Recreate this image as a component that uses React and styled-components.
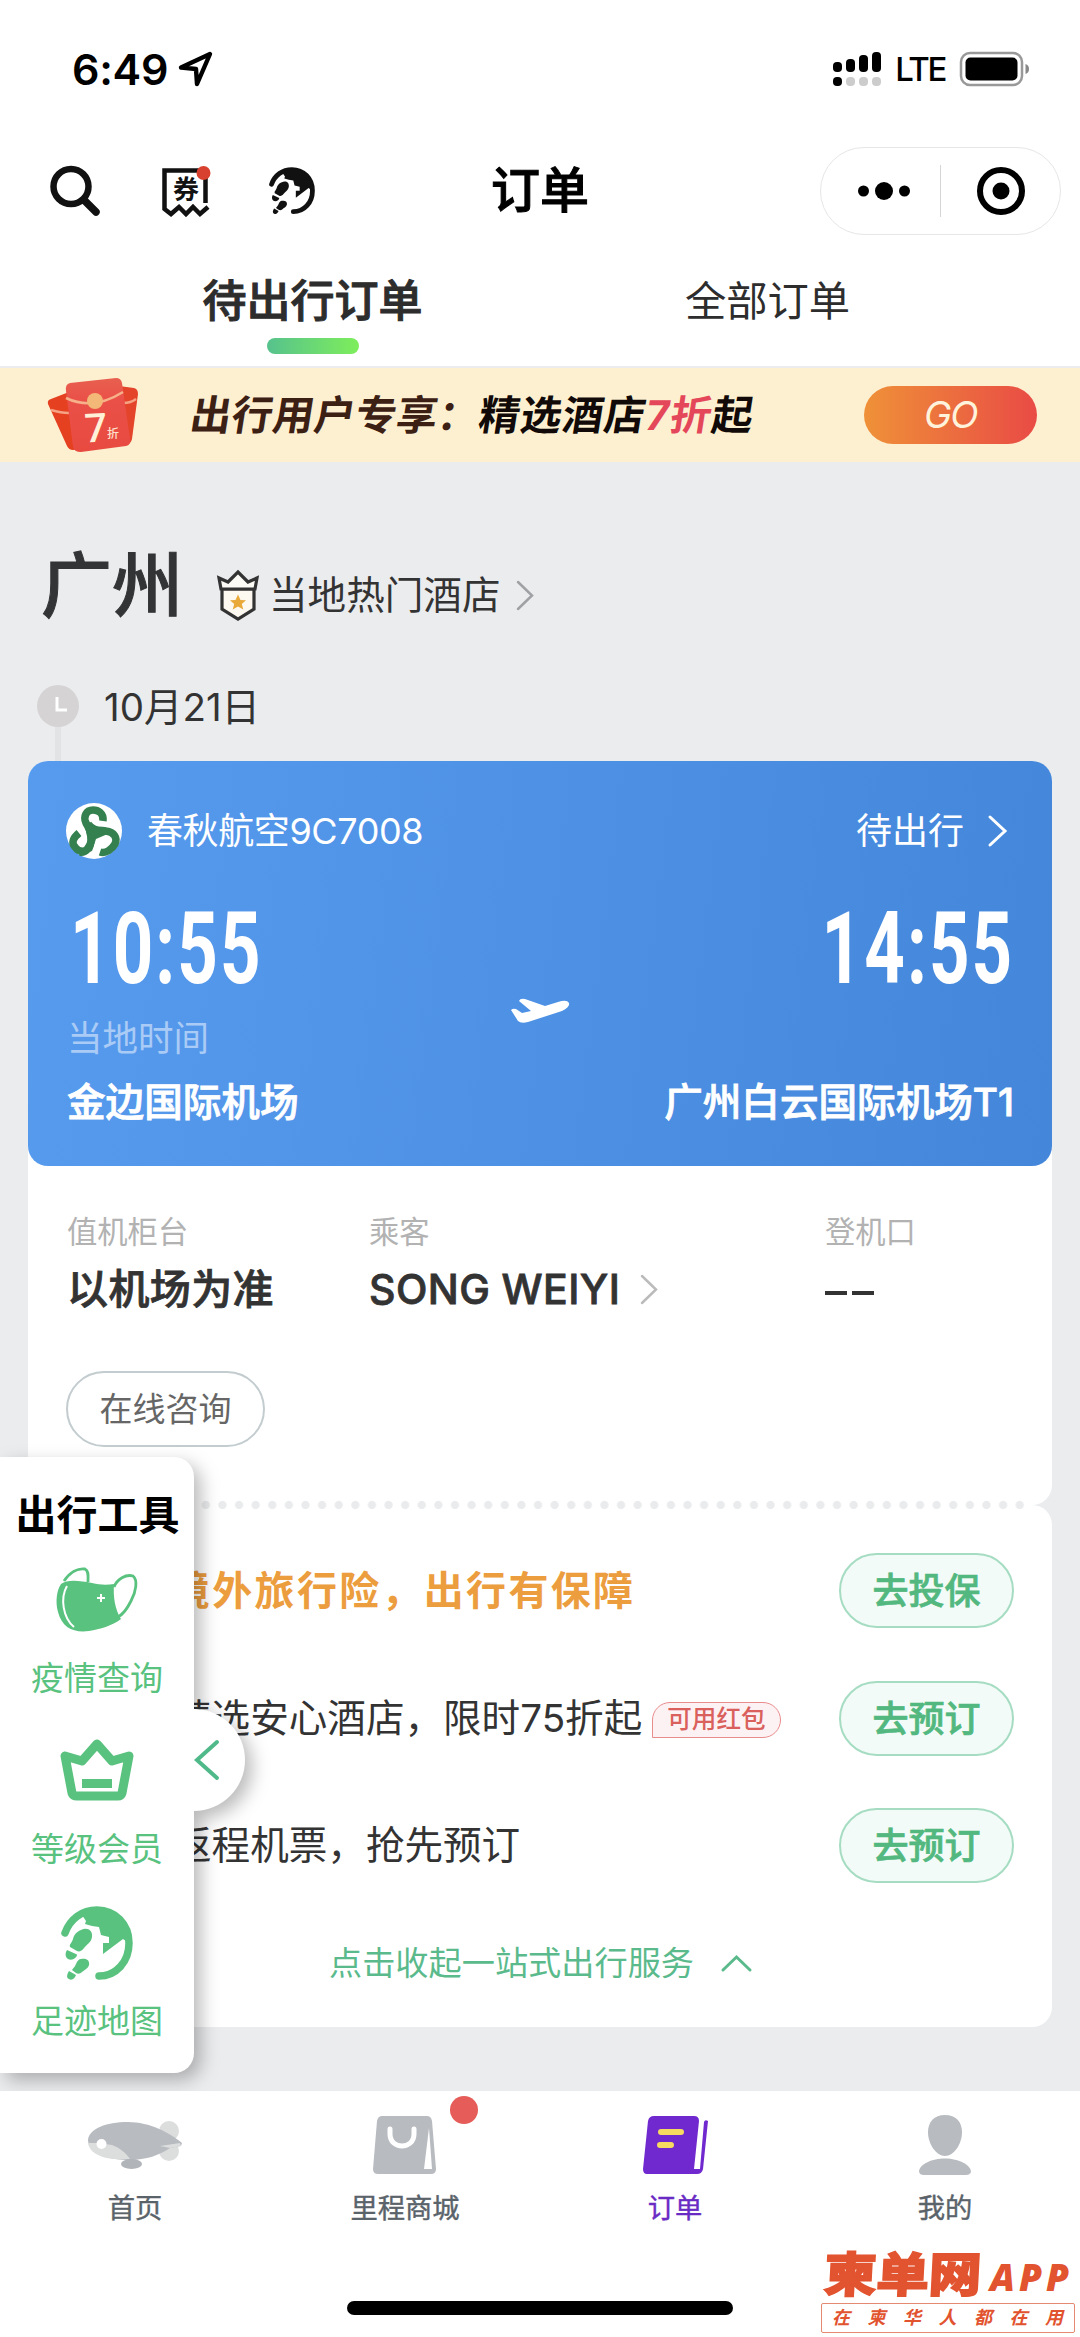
import React, { useState } from 'react';
import styled, { createGlobalStyle } from 'styled-components';

const GlobalStyle = createGlobalStyle`
  * {
    box-sizing: border-box;
  }

  body {
    margin: 0;
    background-color: #fff;
    font-family: Inter, "Noto Sans CJK SC", sans-serif;
    color: #333;
  }

  svg {
    display: block;
    flex: none;
    overflow: visible;
  }
`;

const Page = styled.div`
  position: relative;
  display: flex;
  flex-direction: column;
  width: 1080px;
  height: 2337px;
  overflow: hidden;
  background-color: #ebecee;
  white-space: nowrap;
`;

/* ---------- header ---------- */

const StatusBar = styled.div`
  display: flex;
  align-items: center;
  justify-content: space-between;
  height: 138px;
  padding: 0 51px 0 72px;
  background-color: #fff;
  color: #000;
`;

const StatusGroup = styled.div`
  display: flex;
  align-items: center;
  gap: ${(props) => props.gap}px;
`;

const Clock = styled.span`
  font-size: 43px;
  font-weight: 600;
  line-height: 50px;
  letter-spacing: -0.3px;
`;

const Network = styled.span`
  margin-right: 1px;
  font-size: 33px;
  font-weight: 500;
  line-height: 40px;
  letter-spacing: -2.4px;
`;

const NavBar = styled.div`
  display: grid;
  grid-template-columns: 1fr auto 1fr;
  align-items: center;
  height: 106px;
  padding: 0 19px 0 50px;
  background-color: #fff;
`;

const NavIcons = styled.div`
  display: flex;
  align-items: center;
`;

const NavIcon = styled.div`
  margin-right: ${(props) => props.space || 0}px;
  color: #111;
`;

const NavTitle = styled.div`
  margin-left: -31px;
  font-size: 49px;
  font-weight: 500;
  line-height: 60px;
  color: #000;
  -webkit-text-stroke: 1px #000;
`;

const Capsule = styled.div`
  display: grid;
  grid-template-columns: 119px 1px 119px;
  align-items: center;
  justify-items: center;
  justify-self: end;
  width: 241px;
  height: 88px;
  border: 1px solid #e6e6e6;
  border-radius: 44px;

  svg:first-child {
    margin-left: 7px;
  }
`;

const CapsuleLine = styled.div`
  width: 1px;
  height: 52px;
  background-color: #d5d5d5;
`;

const Tabs = styled.div`
  display: grid;
  grid-template-columns: 1fr 1fr;
  height: 124px;
  padding: 34px 85px 0;
  background-color: #fff;
  border-bottom: 2px solid #ececee;
`;

const Tab = styled.div`
  display: flex;
  flex-direction: column;
  align-items: center;
  gap: 16px;
  font-size: ${(props) => (props.$selected ? '44px' : '41.3px')};
  font-weight: ${(props) => (props.$selected ? 500 : 400)};
  line-height: 46px;
  color: #2d2d2d;
  -webkit-text-stroke: ${(props) => (props.$selected ? '1px #2d2d2d' : '0')};
  cursor: pointer;

  &::after {
    content: '';
    display: ${(props) => (props.$selected ? 'block' : 'none')};
    width: 92px;
    height: 16px;
    margin-top: -2px;
    border-radius: 8px;
    background: linear-gradient(90deg, #56c28d, #7eee5b);
  }
`;

const Banner = styled.div`
  display: flex;
  align-items: center;
  height: 94px;
  padding: 0 43px 0 47px;
  background-color: #fcf0d1;
`;

const BannerText = styled.div`
  display: flex;
  flex: 1;
  margin-left: 51px;
  font-size: 41px;
  font-weight: 700;
  line-height: 50px;
  letter-spacing: 0.2px;
  color: #3d2014;
  transform: skewX(-9deg);
`;

const BannerStrong = styled.span`
  letter-spacing: 0.7px;
  color: #110a08;

  em {
    font-style: normal;
    color: #e5475a;
  }
`;

const GoButton = styled.div`
  width: 173px;
  height: 58px;
  border-radius: 29px;
  background: linear-gradient(90deg, #ef9138, #e94b45);
  font-size: 37px;
  font-style: italic;
  font-weight: 400;
  line-height: 58px;
  text-align: center;
  letter-spacing: -1.5px;
  color: #fff3dc;
`;

/* ---------- trip ---------- */

const CityRow = styled.div`
  display: flex;
  align-items: center;
  height: 92px;
  margin-top: 77px;
  padding-left: 41px;
`;

const City = styled.div`
  width: 176px;
  font-size: 71px;
  font-weight: 500;
  line-height: 92px;
  color: #333436;
  -webkit-text-stroke: 1px #333436;
`;

const HotelLink = styled.div`
  display: flex;
  align-items: center;
  margin-top: 20px;
  font-size: 38.6px;
  line-height: 50px;
  color: #333;

  span {
    margin: 0 17px 0 10px;
  }
`;

const DateRow = styled.div`
  display: flex;
  height: 76px;
  margin-top: 54px;
  padding-left: 37px;
  font-size: 38.5px;
  line-height: 44px;

  span {
    margin-left: 25px;
  }
`;

const Timeline = styled.div`
  display: flex;
  flex-direction: column;
  align-items: center;

  &::after {
    content: '';
    width: 6px;
    height: 34px;
    background-color: #e2e3e4;
  }
`;

const Card = styled.div`
  flex: none;
  height: ${(props) => props.height}px;
  margin: 0 28px;
  border-radius: 20px;
  background-color: #fff;
`;

const Flight = styled.div`
  height: 405px;
  padding: 42px 38px 0;
  border-radius: 20px;
  background: linear-gradient(97deg, #579bef, #4487da);
  color: #fff;
`;

const FlightHead = styled.div`
  display: flex;
  align-items: center;
  height: 56px;
  padding-right: 8px;
  font-size: 36px;
  line-height: 56px;
`;

const FlightNo = styled.span`
  flex: 1;
  margin-left: 25px;
  letter-spacing: -0.4px;
`;

const FlightState = styled.span`
  margin-right: 25px;
`;

const Route = styled.div`
  display: grid;
  grid-template-columns: 1fr 60px 1fr;
  align-items: center;
  height: 227px;
  margin-top: 38px;
`;

const Stop = styled.div`
  display: flex;
  flex-direction: column;
  align-items: ${(props) => (props.$end ? 'flex-end' : 'flex-start')};
  justify-content: space-between;
  height: 227px;
  padding-left: 1px;
`;

const Time = styled.div`
  margin-left: 3px;
  font-family: Roboto, sans-serif;
  font-size: 101px;
  font-weight: 700;
  line-height: 104px;
  letter-spacing: 3px;
  transform: scaleX(0.7);
  transform-origin: ${(props) => (props.$end ? 'right' : 'left')};
`;

const TimeNote = styled.div`
  margin-top: -4px;
  font-size: 35.5px;
  line-height: 40px;
  color: #a9cbf5;
`;

const Airport = styled.div`
  font-size: 38.6px;
  font-weight: 500;
  line-height: 44px;
  -webkit-text-stroke: 0.8px #fff;
`;

const InfoGrid = styled.div`
  display: grid;
  grid-template-columns: 302px 456px 1fr;
  padding: 48px 0 0 39px;
`;

const InfoLabel = styled.div`
  font-size: 30.3px;
  line-height: 36px;
  color: #b2b2b2;
`;

const InfoValue = styled.div`
  display: flex;
  align-items: center;
  gap: 21px;
  height: 48px;
  margin-top: 15px;
  font-size: 41px;
  font-weight: 500;
  line-height: 48px;
  letter-spacing: 0.4px;
  color: #333;
  -webkit-text-stroke: 0.8px #333;
`;

const Dashes = styled.div`
  display: flex;
  gap: 5px;

  &::before,
  &::after {
    content: '';
    width: 22px;
    height: 4px;
    margin-top: 8px;
    background-color: #333;
  }
`;

const AskButton = styled.div`
  width: 199px;
  height: 76px;
  margin: 58px 0 0 38px;
  border: 2px solid #c3cccf;
  border-radius: 38px;
  font-size: 33px;
  line-height: 72px;
  text-align: center;
  color: #666;
`;

const Perforation = styled.div`
  flex: none;
  z-index: 1;
  height: 10px;
  margin: -5px 52px;
  background: radial-gradient(circle, #e9ebec 3.6px, transparent 4.6px) right center / 16.62px 10px repeat-x;
`;

/* ---------- services ---------- */

const ServiceList = styled.div`
  display: flex;
  flex-direction: column;
  gap: 52.5px;
  padding: 48px 38px 0 145px;
`;

const Service = styled.div`
  display: flex;
  align-items: center;
  height: 75px;
`;

const ServiceName = styled.div`
  margin-left: ${(props) => (props.$promo ? '-3px' : '0')};
  font-size: ${(props) => (props.$promo ? '40px' : '38.6px')};
  font-weight: ${(props) => (props.$promo ? 700 : 400)};
  line-height: 75px;
  letter-spacing: ${(props) => (props.$promo ? '2.3px' : '0')};
  color: ${(props) => (props.$promo ? '#ec9d3e' : '#333')};
`;

const CouponTag = styled.div`
  height: 36px;
  margin: 4px 0 0 10px;
  padding: 0 14px;
  border: 1.5px solid #e98c8c;
  border-radius: 18px 18px 18px 0;
  background-color: #fdf2f3;
  font-size: 24.6px;
  font-weight: 500;
  line-height: 33px;
  color: #d9605c;
`;

const ServiceButton = styled.div`
  width: 175px;
  height: 75px;
  margin-left: auto;
  border: 2px solid #a5dcc2;
  border-radius: 38px;
  background-color: #f2fbf7;
  font-size: 36px;
  font-weight: 500;
  line-height: 72px;
  text-align: center;
  color: #52b87f;
  -webkit-text-stroke: 0.7px #52b87f;
`;

const Collapse = styled.div`
  display: flex;
  align-items: center;
  justify-content: center;
  gap: 28px;
  margin-top: 60px;
  font-size: 33.2px;
  line-height: 40px;
  color: #5bba8c;
  cursor: pointer;
`;

/* ---------- floating drawer ---------- */

const Drawer = styled.div`
  position: absolute;
  top: 1457px;
  left: 0;
  z-index: 2;
  width: 194px;
  height: 616px;
  border-radius: 0 20px 20px 0;
  filter: drop-shadow(7px 7px 9px rgba(0, 0, 0, 0.27));
`;

const DrawerPanel = styled.div`
  position: relative;
  display: flex;
  flex-direction: column;
  align-items: center;
  height: 616px;
  padding-top: 33px;
  border-radius: 0 20px 20px 0;
  background-color: #fff;
`;

const DrawerHandle = styled.div`
  position: absolute;
  top: 252px;
  right: -51px;
  display: flex;
  align-items: center;
  width: 102px;
  height: 102px;
  padding-left: 53px;
  border-radius: 51px;
  background-color: #fff;
  color: #4fb98a;
`;

const DrawerTitle = styled.div`
  margin-left: 1px;
  font-size: 41px;
  font-weight: 700;
  line-height: 50px;
  color: #000;
`;

const Tool = styled.div`
  position: relative;
  display: flex;
  flex-direction: column;
  align-items: center;
  justify-content: space-between;
  height: ${(props) => props.height}px;
  margin-top: ${(props) => props.top}px;
  font-size: 33px;
  line-height: 36px;
  color: #59c27f;
`;

/* ---------- bottom bar ---------- */

const TabBar = styled.div`
  position: relative;
  z-index: 3;
  display: flex;
  flex-direction: column;
  align-items: center;
  justify-content: space-between;
  height: 246px;
  margin-top: auto;
  padding-bottom: 22px;
  background-color: #fff;
`;

const TabItems = styled.div`
  display: grid;
  grid-template-columns: repeat(4, 1fr);
  width: 1080px;
  padding-top: 25px;
`;

const TabItem = styled.div`
  display: flex;
  flex-direction: column;
  align-items: center;
  font-size: 27.3px;
  line-height: 34px;
  color: ${(props) => (props.$selected ? '#6a2bc4' : '#5a636a')};
  -webkit-text-stroke: 0.4px;
`;

const TabIcon = styled.div`
  position: relative;
  display: flex;
  align-items: center;
  height: 58px;
  margin-bottom: 18px;
`;

const RedDot = styled.div`
  position: absolute;
  top: -20px;
  right: -41px;
  width: 28px;
  height: 28px;
  border-radius: 50%;
  background-color: #e55c58;
`;

const HomeIndicator = styled.div`
  width: 386px;
  height: 14px;
  border-radius: 7px;
  background-color: #000;
`;

const Watermark = styled.div`
  position: absolute;
  right: 5px;
  bottom: 4px;
  z-index: 4;
  width: 254px;
  color: #e2532f;
`;

const WatermarkName = styled.div`
  display: flex;
  align-items: center;
  height: 52px;
  padding-left: 3px;
  font-size: 53px;
  font-weight: 900;
  line-height: 52px;
  letter-spacing: -0.7px;

  span {
    -webkit-text-stroke: 1.5px #e2532f;
    transform: skewX(-3deg) scaleY(0.9);
  }

  i {
    margin: 3px 0 0 9px;
    font-family: "Open Sans", sans-serif;
    font-size: 37px;
    font-weight: 800;
    letter-spacing: 4px;
  }
`;

const WatermarkSlogan = styled.div`
  display: flex;
  justify-content: space-between;
  height: 30px;
  margin-top: 2px;
  padding: 0 11px 0 10px;
  border: 1.5px solid #e58a70;
  border-radius: 2px;
  font-size: 18px;
  font-style: italic;
  font-weight: 700;
  line-height: 28px;
`;

/* ---------- icons ---------- */

const Chevron = ({ color = 'currentColor', width = 16, height = 27, stroke = 2.5, dir = 'right' }) => {
  const d = {
    right: `M1 0L${width - 1} ${height / 2}L1 ${height}`,
    left: `M${width - 1} 1L1 ${height / 2}L${width - 1} ${height - 1}`,
    up: `M1 ${height - 1}L${width / 2} 1L${width - 1} ${height - 1}`,
  }[dir];
  return (
    <svg width={width} height={height} fill="none" stroke={color} strokeWidth={stroke} strokeLinecap="round">
      <path d={d} />
    </svg>
  );
};

const FootprintMap = ({ size = 72 }) => (
  <svg width={size} height={(size * 75) / 72} viewBox="0 0 72 75" fill="currentColor">
    <path
      d="M4 27C9 13 21 4 36 4C54 4 68 18 68 37C68 56 55 70 38 70"
      fill="none"
      stroke="currentColor"
      strokeWidth="7.5"
      strokeLinecap="round"
    />
    <path d="M21 9L25 15L24 18L31 20L38 21L40 29L48 31V37H42V48L62 33L69 38C71 18 56 2 36 2C30 2 25 5 21 9Z" />
    <path d="M20 24C26 21 32 24 31 31C30 37 26 38 23 42C21 45 18 46 16 45L9 41C8 38 11 37 12 33C13 29 15 26 20 24Z" />
    <path d="M6 44L16 48.500C16 52 11 55 7 53C4 51 4 47 6 44Z" />
    <path d="M20 53C25 52 29 54 28 59C27 63 23 64 21 66C19 68 17 68 15 67L11 64C12 62 14 61 15 58C16 55 18 53 20 53Z" />
    <path d="M8 65L15 69C14 72 11 75 8 73C5 72 6 68 8 65Z" />
  </svg>
);

const CouponIcon = () => (
  <svg width="49" height="50" viewBox="0 0 49 50">
    <path d="M43.500 37V4.500H2.500V43L9 48L17 41L24 48L31 41L38 48L46 41" fill="none" stroke="#111" strokeWidth="4.500" />
    <text x="24" y="32.500" fontSize="26" fontWeight="700" textAnchor="middle" fill="#111">券</text>
    <circle cx="41.500" cy="7" r="7" fill="#d8412f" />
  </svg>
);

const RedPackets = () => (
  <svg width="93" height="76" viewBox="0 0 93 76">
    <defs>
      <linearGradient id="packet" x1="0" y1="0" x2="0" y2="1">
        <stop offset="0" stopColor="#e8604f" />
        <stop offset="0.3" stopColor="#ea5048" />
        <stop offset="1" stopColor="#e84a40" />
      </linearGradient>
    </defs>
    <path d="M4 22L22 15L36 72L26 73Q22 73 20 69L1 27Q0 23 4 22Z" fill="#e5401f" />
    <path d="M72 9L87 11Q91 12 91 17L85 62Q84 67 79 68L68 68Z" fill="#e4442a" />
    <path d="M4 33Q14 36 22 36M76 26Q84 26 89 22" stroke="#f5a384" strokeWidth="2.500" fill="none" />
    <path d="M23 6L69 1Q74 1 75 6L83 62Q84 68 79 69L34 75Q27 75 26 70L19 14Q18 7 23 6Z" fill="url(#packet)" />
    <path d="M19 21Q46 34 76 15" stroke="#f6b08a" strokeWidth="2.500" fill="none" />
    <circle cx="48" cy="24" r="8" fill="#f3b777" />
    <text x="49" y="65" fontSize="40" fontFamily="Roboto" fontWeight="500" textAnchor="middle" fill="#fff0d8" transform="rotate(-3 49 55)">7</text>
    <text x="66" y="61" fontSize="12" fontWeight="500" textAnchor="middle" fill="#ffe0cc">折</text>
  </svg>
);

const HotelBadge = () => (
  <svg width="42" height="51" viewBox="0 0 42 51">
    <path d="M5 19H37V39L21 49L5 39Z" fill="#fdf8f0" stroke="#333" strokeWidth="3.200" />
    <path d="M4 19L2 8L11 12L21 2L31 12L40 8L38 19Z" fill="#fdfbf6" stroke="#333" strokeWidth="3.200" />
    <path d="M21 24.500L23.500 30L29 30.300L24.800 34L26.300 39.500L21 36.500L15.700 39.500L17.200 34L13 30.300L18.500 30Z" fill="#e9a93a" />
  </svg>
);

const AirlineLogo = () => (
  <svg width="56" height="56" viewBox="0 0 56 56">
    <circle cx="28" cy="28" r="28" fill="#fff" />
    <g fill="none" stroke="#35804f" strokeWidth="7.500">
      <path d="M37 18C38 10 32 7 27 7C20 7 17 14 20 20C23 26 26 29 25 37C25 45 19 50 14 49" />
      <path d="M13 30C7 35 5 40 9 44C11 47 14 49 19 48" />
      <path d="M22 21C27 28 34 27 40 28C48 29 52 35 49 41C46 46 40 51 34 49" />
    </g>
    <path d="M19 24L34 26L44 30L30 36L26 48L13 52L22 38Z" fill="#35804f" />
    <circle cx="38.500" cy="38.500" r="4.500" fill="#fff" />
    <circle cx="15.500" cy="39" r="4" fill="#fff" />
  </svg>
);

const PlaneIcon = () => (
  <svg width="60" height="26" viewBox="0 0 60 26" fill="#fff">
    <path d="M1 12Q3 10 6 11L12 15L21 13L9 3Q10 0 15 1L35 8L48 4Q57 1 59 5Q60 9 52 13L18 24Q11 26 8 23Z" />
  </svg>
);

const MaskIcon = () => (
  <svg width="82" height="65" viewBox="0 0 82 65">
    <path d="M8 14C14 5 22 1 29 2C33 4 32 9 32 15" fill="none" stroke="#59c27f" strokeWidth="2.800" />
    <path d="M58 20C61 12 70 7 77 9C82 13 80 25 75 34C71 42 66 48 62 50" fill="none" stroke="#59c27f" strokeWidth="2.800" />
    <path d="M5 17C12 12 24 14 36 16C44 18 51 18 58 17C57 30 59 42 65 52C56 59 44 62 33 64C18 66 6 61 2 45C-1 34 1 23 5 17Z" fill="#59c27f" />
    <path d="M11 19C4 31 7 51 18 60" fill="none" stroke="#fff" strokeWidth="2" />
    <path d="M45 27V35M41 31H49" stroke="#fff" strokeWidth="2" />
  </svg>
);

const CrownIcon = () => (
  <svg width="74" height="62" viewBox="0 0 74 62">
    <path
      d="M5 17L22 22L37 5L52 22L69 17L62 54Q61 57 58 57H17Q13 57 12 54Z"
      fill="none"
      stroke="#59c27f"
      strokeWidth="9"
      strokeLinejoin="round"
    />
    <path d="M22 40H52V49H22Z" fill="#59c27f" />
  </svg>
);

const BlimpIcon = () => (
  <svg width="94" height="48" viewBox="0 0 94 48">
    <circle cx="81" cy="10" r="10" fill="#dcdddd" />
    <circle cx="81" cy="30" r="10" fill="#dcdddd" />
    <path d="M0 20C0 8 18 1 40 1C62 1 82 12 94 22L93 25L82 27C72 34 58 39 42 39C18 39 2 32 0 20Z" fill="#b8bbc0" />
    <path d="M0 22H10L24 24C32 27 38 32 42 38C18 40 2 34 0 22Z" fill="#dcdddd" />
    <path d="M72 25L92 22L93 25L82 27Z" fill="#dcdddd" />
    <ellipse cx="43.500" cy="43" rx="10.500" ry="5" fill="#b1b4b9" />
    <circle cx="13.500" cy="23" r="5" fill="#fff" />
  </svg>
);

const BagIcon = () => (
  <svg width="64" height="58" viewBox="0 0 64 58">
    <path d="M9 0H54Q58 0 59 5L63 53Q63 58 58 58H5Q0 58 0 53L4 5Q5 0 9 0Z" fill="#b8bbc0" />
    <path d="M17 13V18C17 34 41 34 41 18V13" fill="none" stroke="#fff" strokeWidth="5" strokeLinecap="round" />
    <path d="M56 12L59 53H51Z" fill="#fff" />
  </svg>
);

const OrderIcon = () => (
  <svg width="65" height="58" viewBox="0 0 65 58">
    <path d="M11 0H51Q56 0 56 5L51 53H57L61 6Q62 3 65 5L60 53Q59 58 54 58H4Q0 58 0 53L5 5Q6 0 11 0Z" fill="#7028cf" />
    <path d="M18 16H38M17 29H28" stroke="#f7da60" strokeWidth="6" strokeLinecap="round" />
  </svg>
);

const PersonIcon = () => (
  <svg width="52" height="60" viewBox="0 0 52 60" fill="#b8bbc0">
    <path d="M26 0C37 0 43 7 43 17C43 29 35 41 26 41C17 41 9 29 9 17C9 7 15 0 26 0Z" />
    <path d="M26 43.500C40 43.500 52 50 52 57Q51 60 47 60H5Q0 60 0 56C1 49 13 43.500 26 43.500Z" />
  </svg>
);

const tabBarItems = [
  { name: '首页', icon: <BlimpIcon /> },
  { name: '里程商城', icon: <BagIcon />, dot: true },
  { name: '订单', icon: <OrderIcon /> },
  { name: '我的', icon: <PersonIcon /> },
];

const services = [
  { name: '境外旅行险，出行有保障', action: '去投保', promo: true },
  { name: '精选安心酒店，限时75折起', action: '去预订', tag: '可用红包' },
  { name: '返程机票，抢先预订', action: '去预订' },
];

export default function App() {
  const [selectedTab, setSelectedTab] = useState('待出行订单');

  return (
    <Page>
      <GlobalStyle />
      <StatusBar>
        <StatusGroup gap={11}>
          <Clock>6:49</Clock>
          <svg width="33" height="34" viewBox="0 0 33 34" fill="none" stroke="#000" strokeWidth="4.400" strokeLinejoin="round">
            <path d="M31 2L2 15.500L17 17L18 32Z" />
          </svg>
        </StatusGroup>
        <StatusGroup gap={14}>
          <svg width="48" height="34" viewBox="0 0 48 34">
            <rect x="0" y="10" width="9" height="10" rx="4" />
            <rect x="13" y="7" width="9" height="13" rx="4" />
            <rect x="26" y="3" width="9" height="17" rx="4" />
            <rect x="39" y="0" width="9" height="20" rx="4" />
            <rect x="0" y="25" width="9" height="9" rx="4" />
            <g fill="#ccc">
              <rect x="13" y="25" width="9" height="9" rx="4" />
              <rect x="26" y="25" width="9" height="9" rx="4" />
              <rect x="39" y="25" width="9" height="9" rx="4" />
            </g>
          </svg>
          <Network>LTE</Network>
          <svg width="69" height="34" viewBox="0 0 69 34">
            <rect x="1" y="1" width="61" height="32" rx="9" fill="none" stroke="#999" strokeWidth="2.500" />
            <rect x="5.500" y="5.500" width="52" height="23" rx="5" />
            <path d="M65.500 12Q69 13 69 17Q69 21 65.500 22Z" fill="#888" />
          </svg>
        </StatusGroup>
      </StatusBar>

      <NavBar>
        <NavIcons>
          <NavIcon space={62}>
            <svg width="50" height="50" viewBox="0 0 50 50" fill="none" stroke="currentColor">
              <circle cx="21" cy="20.500" r="17.500" strokeWidth="6.500" />
              <path d="M34 34L46 46" strokeWidth="7.500" strokeLinecap="round" />
            </svg>
          </NavIcon>
          <NavIcon space={58}>
            <CouponIcon />
          </NavIcon>
          <NavIcon>
            <FootprintMap size={46} />
          </NavIcon>
        </NavIcons>
        <NavTitle>订单</NavTitle>
        <Capsule>
          <svg width="52" height="18" viewBox="0 0 52 18">
            <circle cx="5.500" cy="9" r="5.500" />
            <circle cx="26" cy="9" r="9" />
            <circle cx="46.500" cy="9" r="5.500" />
          </svg>
          <CapsuleLine />
          <svg width="48" height="48" viewBox="0 0 48 48">
            <circle cx="24" cy="24" r="21" fill="none" stroke="#000" strokeWidth="6" />
            <circle cx="24" cy="24" r="8.500" />
          </svg>
        </Capsule>
      </NavBar>

      <Tabs>
        {['待出行订单', '全部订单'].map((tab) => (
          <Tab key={tab} $selected={selectedTab === tab} onClick={() => setSelectedTab(tab)}>
            {tab}
          </Tab>
        ))}
      </Tabs>

      <Banner>
        <RedPackets />
        <BannerText>
          出行用户专享：
          <BannerStrong>
            精选酒店<em>7折</em>起
          </BannerStrong>
        </BannerText>
        <GoButton>GO</GoButton>
      </Banner>

      <CityRow>
        <City>广州</City>
        <HotelLink>
          <HotelBadge />
          <span>当地热门酒店</span>
          <Chevron color="#a0a1a4" />
        </HotelLink>
      </CityRow>

      <DateRow>
        <Timeline>
          <svg width="42" height="42" viewBox="0 0 42 42">
            <circle cx="21" cy="21" r="21" fill="#d5d3d4" />
            <path d="M20 12V25H30" fill="none" stroke="#fff" strokeWidth="3" />
          </svg>
        </Timeline>
        <span>10月21日</span>
      </DateRow>

      <Card height={744}>
        <Flight>
          <FlightHead>
            <AirlineLogo />
            <FlightNo>春秋航空9C7008</FlightNo>
            <FlightState>待出行</FlightState>
            <Chevron width={17} height={28} stroke={3} />
          </FlightHead>
          <Route>
            <Stop>
              <Time>10:55</Time>
              <TimeNote>当地时间</TimeNote>
              <Airport>金边国际机场</Airport>
            </Stop>
            <PlaneIcon />
            <Stop $end>
              <Time $end>14:55</Time>
              <Airport>广州白云国际机场T1</Airport>
            </Stop>
          </Route>
        </Flight>
        <InfoGrid>
          <div>
            <InfoLabel>值机柜台</InfoLabel>
            <InfoValue>以机场为准</InfoValue>
          </div>
          <div>
            <InfoLabel>乘客</InfoLabel>
            <InfoValue>
              SONG WEIYI
              <Chevron color="#bbb" />
            </InfoValue>
          </div>
          <div>
            <InfoLabel>登机口</InfoLabel>
            <InfoValue>
              <Dashes />
            </InfoValue>
          </div>
        </InfoGrid>
        <AskButton>在线咨询</AskButton>
      </Card>

      <Perforation />

      <Card height={522}>
        <ServiceList>
          {services.map((service) => (
            <Service key={service.name}>
              <ServiceName $promo={service.promo}>{service.name}</ServiceName>
              {service.tag && <CouponTag>{service.tag}</CouponTag>}
              <ServiceButton>{service.action}</ServiceButton>
            </Service>
          ))}
        </ServiceList>
        <Collapse>
          点击收起一站式出行服务
          <Chevron dir="up" width={29} height={15} stroke={3} />
        </Collapse>
      </Card>

      <Drawer>
        <DrawerHandle>
          <Chevron dir="left" width={22} height={38} stroke={4} />
        </DrawerHandle>
        <DrawerPanel>
          <DrawerTitle>出行工具</DrawerTitle>
          <Tool height={129} top={27}>
            <MaskIcon />
            疫情查询
          </Tool>
          <Tool height={128} top={43}>
            <CrownIcon />
            等级会员
          </Tool>
          <Tool height={133} top={39}>
            <FootprintMap />
            足迹地图
          </Tool>
        </DrawerPanel>
      </Drawer>

      <TabBar>
        <TabItems>
          {tabBarItems.map((item) => (
            <TabItem key={item.name} $selected={item.name === '订单'}>
              <TabIcon>
                {item.icon}
                {item.dot && <RedDot />}
              </TabIcon>
              {item.name}
            </TabItem>
          ))}
        </TabItems>
        <HomeIndicator />
      </TabBar>

      <Watermark>
        <WatermarkName>
          <span>柬单网</span>
          <i>APP</i>
        </WatermarkName>
        <WatermarkSlogan>
          {[...'在柬华人都在用'].map((char, index) => (
            <span key={index}>{char}</span>
          ))}
        </WatermarkSlogan>
      </Watermark>
    </Page>
  );
}
